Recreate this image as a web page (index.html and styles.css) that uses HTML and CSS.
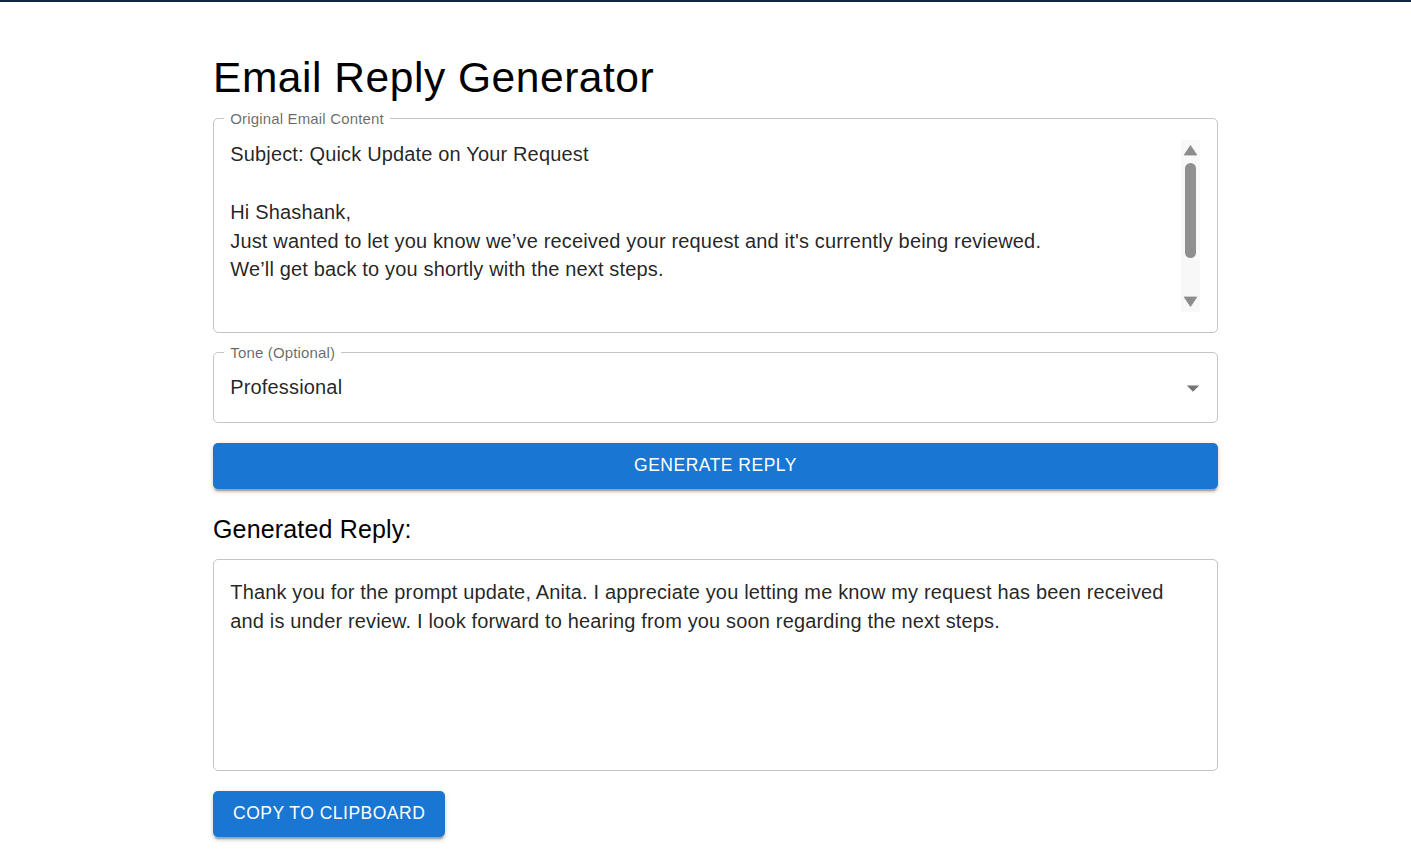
FILE: index.html
```html
<!DOCTYPE html>
<html lang="en">
<head>
<meta charset="utf-8">
<title>Email Reply Generator</title>
<link rel="stylesheet" href="styles.css">
</head>
<body>
<div class="topbar"></div>
<main class="container">
  <h1 class="title">Email Reply Generator</h1>

  <fieldset class="field field-multi">
    <legend class="field-label">Original Email Content</legend>
    <div class="multi-row">
      <div class="multi-text">Subject: Quick Update on Your Request

Hi Shashank,
Just wanted to let you know we’ve received your request and it's currently being reviewed.
We’ll get back to you shortly with the next steps.</div>
      <div class="scrollbar">
        <svg class="sb-arrow" width="19" height="19" viewBox="0 0 19 19"><polygon points="9.5,5.5 15.8,15 3.2,15" fill="#8c8c8c" stroke="#8c8c8c" stroke-width="0.8" stroke-linejoin="round"/></svg>
        <div class="sb-thumb"></div>
        <div class="sb-space"></div>
        <svg class="sb-arrow" width="19" height="19" viewBox="0 0 19 19"><polygon points="3.2,4 15.8,4 9.5,13.5" fill="#8c8c8c" stroke="#8c8c8c" stroke-width="0.8" stroke-linejoin="round"/></svg>
      </div>
    </div>
  </fieldset>

  <fieldset class="field field-select">
    <legend class="field-label">Tone (Optional)</legend>
    <div class="select-row">
      <span class="select-value">Professional</span>
      <svg class="select-icon" width="30" height="30" viewBox="0 0 24 24"><path d="M7 10l5 5 5-5z" fill="#757575"/></svg>
    </div>
  </fieldset>

  <button class="btn btn-full" type="button">Generate Reply</button>

  <h2 class="subtitle">Generated Reply:</h2>

  <div class="reply-box">
    <div class="reply-text">Thank you for the prompt update, Anita. I appreciate you letting me know my request has been received and is under review. I look forward to hearing from you soon regarding the next steps.</div>
  </div>

  <button class="btn btn-copy" type="button">Copy to Clipboard</button>
</main>
</body>
</html>
```

FILE: styles.css
```css
html, body {
  margin: 0;
  padding: 0;
  background: #ffffff;
}

body {
  font-family: "Liberation Sans", Arial, Helvetica, sans-serif;
  color: rgba(0, 0, 0, 0.87);
  letter-spacing: 0.01em;
}

.topbar {
  height: 2px;
  background: #10273f;
}

.container {
  width: 1005px;
  margin: 0 0 0 213px;
  padding-bottom: 26px;
}

.title {
  margin: 50px 0 6.8px;
  font-size: 42.5px;
  line-height: 52.5px;
  font-weight: 400;
  color: #000;
  letter-spacing: 0.0127em;
}

.field {
  margin: 0;
  min-width: 0;
  border: 1px solid #c4c4c4;
  border-radius: 5px;
  padding: 14px 17px 19.6px 16.25px;
}

.field-label {
  font-size: 15px;
  line-height: 15px;
  color: rgba(0, 0, 0, 0.6);
  padding: 0 6.25px;
  margin-left: -6.25px;
}

.multi-row {
  display: flex;
  height: 172.5px;
}

.multi-text {
  flex: 1;
  white-space: pre-line;
  font-size: 20px;
  line-height: 28.75px;
}

.scrollbar {
  width: 19px;
  height: 172px;
  background: #f8f8f8;
  display: flex;
  flex-direction: column;
  align-items: center;
}

.sb-arrow {
  display: block;
  flex: none;
}

.sb-thumb {
  flex: none;
  width: 11px;
  height: 95px;
  margin-top: 4px;
  border-radius: 6px;
  background: #8f8f8f;
}

.sb-space {
  flex: 1;
}

.field-select {
  margin-top: 11.5px;
  padding: 13.6px 8.75px 19.6px 16.25px;
}

.select-row {
  display: flex;
  align-items: center;
  height: 28.75px;
}

.select-value {
  flex: 1;
  font-size: 20px;
  line-height: 28.75px;
}

.select-icon {
  display: block;
  margin: -1px 0;
}

.btn {
  display: block;
  height: 46px;
  border: none;
  border-radius: 5px;
  background: #1976d2;
  color: #ffffff;
  font-family: "Liberation Sans", Arial, Helvetica, sans-serif;
  font-size: 17.5px;
  letter-spacing: 0.5px;
  text-transform: uppercase;
  box-shadow: 0 3.75px 1.25px -2.5px rgba(0, 0, 0, 0.2),
              0 2.5px 2.5px 0 rgba(0, 0, 0, 0.14),
              0 1.25px 6.25px 0 rgba(0, 0, 0, 0.12);
  cursor: pointer;
}

.btn-full {
  width: 100%;
  margin-top: 20px;
}

.subtitle {
  margin: 20px 0 10.5px;
  font-size: 25px;
  line-height: 40px;
  font-weight: 400;
  color: #000;
}

.reply-box {
  border: 1px solid #c4c4c4;
  border-radius: 5px;
  padding: 17.5px 17px 19.5px 16.25px;
}

.reply-text {
  height: 172.5px;
  font-size: 20px;
  line-height: 28.75px;
}

.btn-copy {
  margin-top: 20px;
  padding: 0 20px;
}
```
